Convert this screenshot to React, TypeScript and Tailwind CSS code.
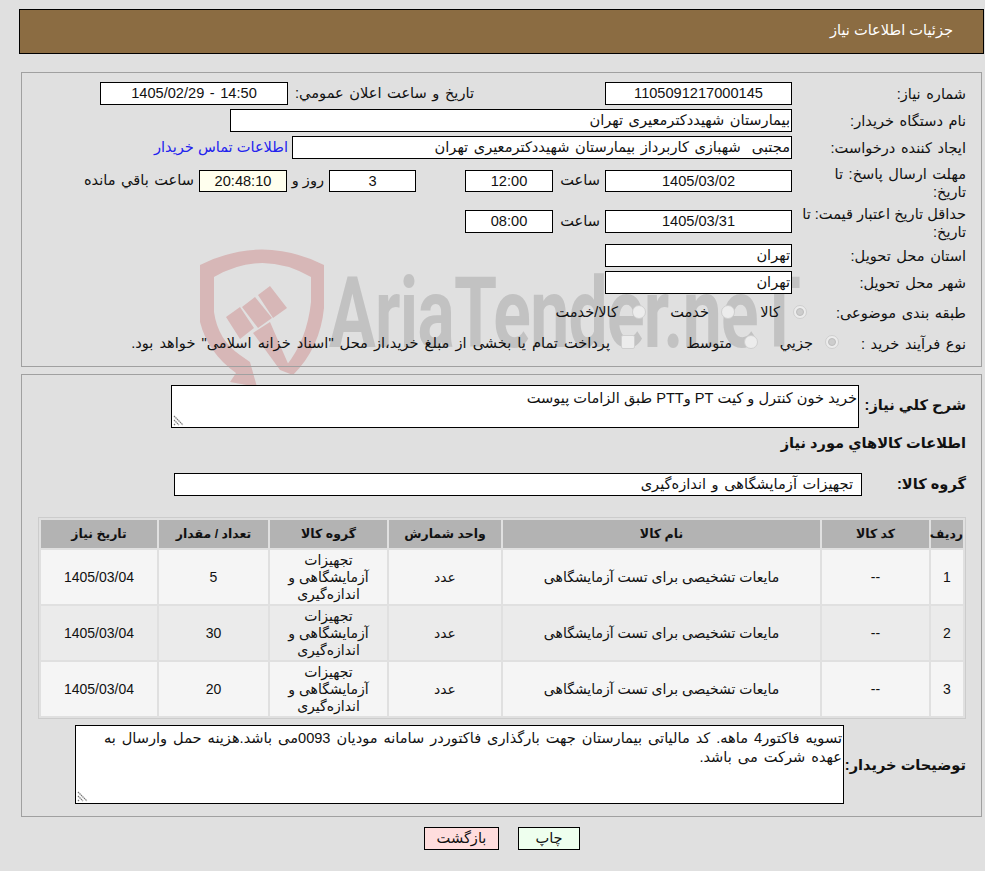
const rows = [
  { id: 1, qty: "5" },
  { id: 2, qty: "30" },
  { id: 3, qty: "20" },
];

function Field({ className, children }: { className: string; children?: React.ReactNode }) {
  return <div className={"shrink-0 border border-black leading-[21px] whitespace-pre overflow-hidden " + className}>{children}</div>;
}

function Label({ children, className = "" }: { children: React.ReactNode; className?: string }) {
  return <div className={"w-[189px] shrink-0 whitespace-nowrap pr-[15px] leading-[18px] " + className}>{children}</div>;
}

function Radio({ className = "", checked = false }: { className?: string; checked?: boolean }) {
  return (
    <span className={"flex h-[14px] w-[14px] shrink-0 items-center justify-center rounded-full border border-[#cfcfcf] bg-[#ececec] " + className}>
      {checked && <span className="h-[8px] w-[8px] rounded-full border border-[#bdbdbd] bg-[#cdcdcd]" />}
    </span>
  );
}

function Grip() {
  return (
    <svg className="absolute bottom-[1px] left-[1px]" width="11" height="11" viewBox="0 0 11 11">
      <path d="M1 1 L10 10 M1 5 L6 10 M1 9 L2 10" stroke="#777" strokeWidth="1.2" strokeDasharray="1.5 0.6" />
    </svg>
  );
}

function Watermark() {
  return (
    <div className="pointer-events-none absolute left-[198px] top-[248px] h-[150px] w-[620px]" dir="ltr">
      <svg className="absolute left-0 top-0" width="130" height="145" viewBox="0 0 130 145">
        <g fill="#d7b7b7">
          <path d="M2 17 Q64 -14 126 17 L126 60 Q122 100 95 127 L88 118 Q109 92 113 54 L113 29 Q64 1 16 29 L16 64 Q20 92 42 107 L52 114 L59 139 L32 134 L38 125 Q10 105 2 74 Z" />
          <path d="M28 69 L42 59 L56 80 L42 91 Z M44 59 L57 49 L74 70 L60 80 Z M60 47 L72 38 L89 60 L75 70 Z" />
          <path d="M55 85 L72 74 L95 127 L82 122 Z" />
        </g>
      </svg>
      <div className="absolute left-[131px] top-[11px] origin-left scale-x-[0.71] font-['Roboto',sans-serif] text-[98px] font-bold leading-[110px] tracking-[-1px] text-[#c2c2c2] whitespace-nowrap">
        AriaTender.neT
      </div>
    </div>
  );
}

export default function App() {
  return (
    <div dir="rtl" className="relative min-h-[871px] overflow-hidden bg-[#e0e0e0] font-['Liberation_Sans','DejaVu_Sans',sans-serif] text-[14.6px] text-[#111] [word-spacing:1.5px]">
      <Watermark />
      <div className="relative pl-[19px] pr-[1px] pt-[9px]">
        <div className="flex h-[45px] items-center border border-black bg-[#8b6c42] pr-[30px] pb-[1px] text-white [word-spacing:0]">
          جزئیات اطلاعات نیاز
        </div>
      </div>

      <div className="relative ml-[21px] mr-[3px] mt-[18px] h-[295px] border border-[#a0a0a0] pt-[9px]">
        <div className="flex items-center">
          <Label>شماره نیاز:</Label>
          <Field className="h-[23px] w-[187px] bg-white text-center">1105091217000145</Field>
          <div className="w-[131px] shrink-0" />
          <div className="w-[186px] shrink-0 whitespace-nowrap">تاریخ و ساعت اعلان عمومي:</div>
          <Field className="h-[23px] w-[188px] bg-white text-center">
            <span dir="ltr">1405/02/29 - 14:50</span>
          </Field>
        </div>
        <div className="mt-[4px] flex items-center">
          <Label>نام دستگاه خریدار:</Label>
          <Field className="h-[23px] w-[562px] bg-white pr-[1px]">بیمارستان شهیددکترمعیری تهران</Field>
        </div>
        <div className="mt-[4px] flex items-center">
          <Label>ایجاد کننده درخواست:</Label>
          <Field className="h-[23px] w-[500px] bg-white pr-[1px]">مجتبی  شهبازی کاربرداز بیمارستان شهیددکترمعیری تهران</Field>
          <a className="mr-[4px] whitespace-nowrap text-[#2222ee] [word-spacing:0]">اطلاعات تماس خریدار</a>
        </div>
        <div className="mt-[6px] flex h-[36px] items-start">
          <Label>مهلت ارسال پاسخ: تا<br />تاریخ:</Label>
          <div className="mt-[5px] flex items-center">
            <Field className="h-[22px] w-[187px] bg-white text-center">1405/03/02</Field>
            <div className="w-[52px] shrink-0 pr-[5px]">ساعت</div>
            <Field className="h-[22px] w-[88px] bg-white text-center">12:00</Field>
            <div className="w-[49px] shrink-0" />
            <Field className="h-[22px] w-[87px] bg-white text-center">3</Field>
            <div className="w-[42px] shrink-0 whitespace-nowrap pr-[5px] [word-spacing:0]">روز و</div>
            <Field className="h-[22px] w-[88px] bg-[#ffffee] text-center">20:48:10</Field>
            <div className="mr-[5px] whitespace-nowrap">ساعت باقي مانده</div>
          </div>
        </div>
        <div className="mt-[4px] flex h-[36px] items-start">
          <Label className="[word-spacing:0]">حداقل تاریخ اعتبار قیمت: تا<br />تاریخ:</Label>
          <div className="mt-[5px] flex items-center">
            <Field className="h-[23px] w-[187px] bg-white text-center">1405/03/31</Field>
            <div className="w-[52px] shrink-0 pr-[5px]">ساعت</div>
            <Field className="h-[23px] w-[88px] bg-white text-center">08:00</Field>
          </div>
        </div>
        <div className="mt-[3px] flex items-center">
          <Label>استان محل تحویل:</Label>
          <Field className="h-[23px] w-[187px] bg-white pr-[1px]">تهران</Field>
        </div>
        <div className="mt-[4px] flex items-center">
          <Label>شهر محل تحویل:</Label>
          <Field className="h-[23px] w-[187px] bg-white pr-[1px]">تهران</Field>
        </div>
        <div className="mt-[8px] flex h-[22px] items-center">
          <Label>طبقه بندی موضوعی:</Label>
          <Radio checked className="mr-[-15px] mt-[-2px]" />
          <span className="mr-[13px] w-[40px] shrink-0">کالا</span>
          <Radio className="mr-[5px] mt-[-2px]" />
          <span className="mr-[12px] w-[60px] shrink-0">خدمت</span>
          <Radio className="mr-[3px] mt-[-2px]" />
          <span className="mr-[14px] whitespace-nowrap">کالا/خدمت</span>
        </div>
        <div className="mt-[9px] flex h-[22px] items-center">
          <div className="w-[142px] shrink-0 whitespace-nowrap pr-[15px] leading-[18px]">نوع فرآیند خرید :</div>
          <Radio checked className="mt-[-4px]" />
          <span className="mr-[12px] w-[60px] shrink-0">جزیي</span>
          <Radio className="mr-[-5px] mt-[-4px]" />
          <span className="mr-[12px] w-[100px] shrink-0">متوسط</span>
          <span className="mr-[-3px] mt-[-5px] h-[14px] w-[14px] shrink-0 rounded-[2px] border border-[#cfcfcf] bg-[#ececec]" />
          <span className="mr-[11px] whitespace-nowrap [word-spacing:2px]">پرداخت تمام یا بخشی از مبلغ خرید،از محل "اسناد خزانه اسلامی" خواهد بود.</span>
        </div>
      </div>

      <div className="relative ml-[21px] mr-[3px] mt-[7px] h-[443px] border border-[#a0a0a0] pt-[10px]">
        <div className="flex">
          <div className="w-[122px] shrink-0 pr-[15px] pt-[10px] font-bold whitespace-nowrap [word-spacing:0]">شرح کلي نیاز:</div>
          <div className="relative h-[43px] w-[688px] border border-black bg-white pr-[1px] pt-[1px] leading-[22px] [word-spacing:0]">
            خرید خون کنترل و کیت PT وPTT طبق الزامات پیوست
            <Grip />
          </div>
        </div>
        <div className="mt-[4px] pr-[15px] font-bold leading-[22px] [word-spacing:0]">اطلاعات کالاهاي مورد نیاز</div>
        <div className="mt-[19px] flex items-center">
          <div className="w-[119px] shrink-0 pr-[15px] font-bold [word-spacing:0]">گروه کالا:</div>
          <div className="h-[23px] w-[688px] border border-black bg-white pr-[8px] leading-[21px]">تجهیزات آزمایشگاهی و اندازه‌گیری</div>
        </div>
        <table className="mt-[21px] mr-[15px] w-[928px] table-fixed border-separate border-spacing-[2px] border border-[#cccccc] text-center text-[14px] [word-spacing:0]">
          <colgroup>
            <col className="w-[32px]" />
            <col className="w-[107px]" />
            <col className="w-[317px]" />
            <col className="w-[112px]" />
            <col className="w-[117px]" />
            <col className="w-[109px]" />
            <col className="w-[116px]" />
          </colgroup>
          <thead>
            <tr className="h-[28px] bg-[#b3b3b3] text-[12.5px] font-bold">
              <th>ردیف</th>
              <th>کد کالا</th>
              <th>نام کالا</th>
              <th>واحد شمارش</th>
              <th>گروه کالا</th>
              <th>تعداد / مقدار</th>
              <th>تاریخ نیاز</th>
            </tr>
          </thead>
          <tbody>
            {rows.map((r) => (
              <tr key={r.id} className={r.id === 2 ? "h-[54px] bg-[#ebebeb]" : "h-[54px] bg-[#f5f5f5]"}>
                <td>{r.id}</td>
                <td>--</td>
                <td>مایعات تشخیصی برای تست آزمایشگاهی</td>
                <td>عدد</td>
                <td className="px-[8px] leading-[17px]">تجهیزات آزمایشگاهی و اندازه‌گیری</td>
                <td>{r.qty}</td>
                <td>1405/03/04</td>
              </tr>
            ))}
          </tbody>
        </table>
        <div className="mt-[6px] flex items-center">
          <div className="w-[137px] shrink-0 whitespace-nowrap pr-[15px] pt-[2px] font-bold [word-spacing:0]">توضیحات خریدار:</div>
          <div className="relative h-[79px] w-[769px] border border-black bg-white px-[1px] pt-[3px] leading-[19px] [word-spacing:1.9px]">
            تسویه فاکتور4 ماهه. کد مالیاتی بیمارستان جهت بارگذاری فاکتوردر سامانه مودیان 0093می باشد.هزینه حمل وارسال به عهده شرکت می باشد.
            <Grip />
          </div>
        </div>
      </div>

      <div className="relative mt-[10px] flex justify-center gap-[19px] pl-[19px]">
        <button className="h-[23px] w-[62px] border border-black bg-[#eeffee]">چاپ</button>
        <button className="h-[23px] w-[75px] border border-black bg-[#ffdddd]">بازگشت</button>
      </div>
    </div>
  );
}
